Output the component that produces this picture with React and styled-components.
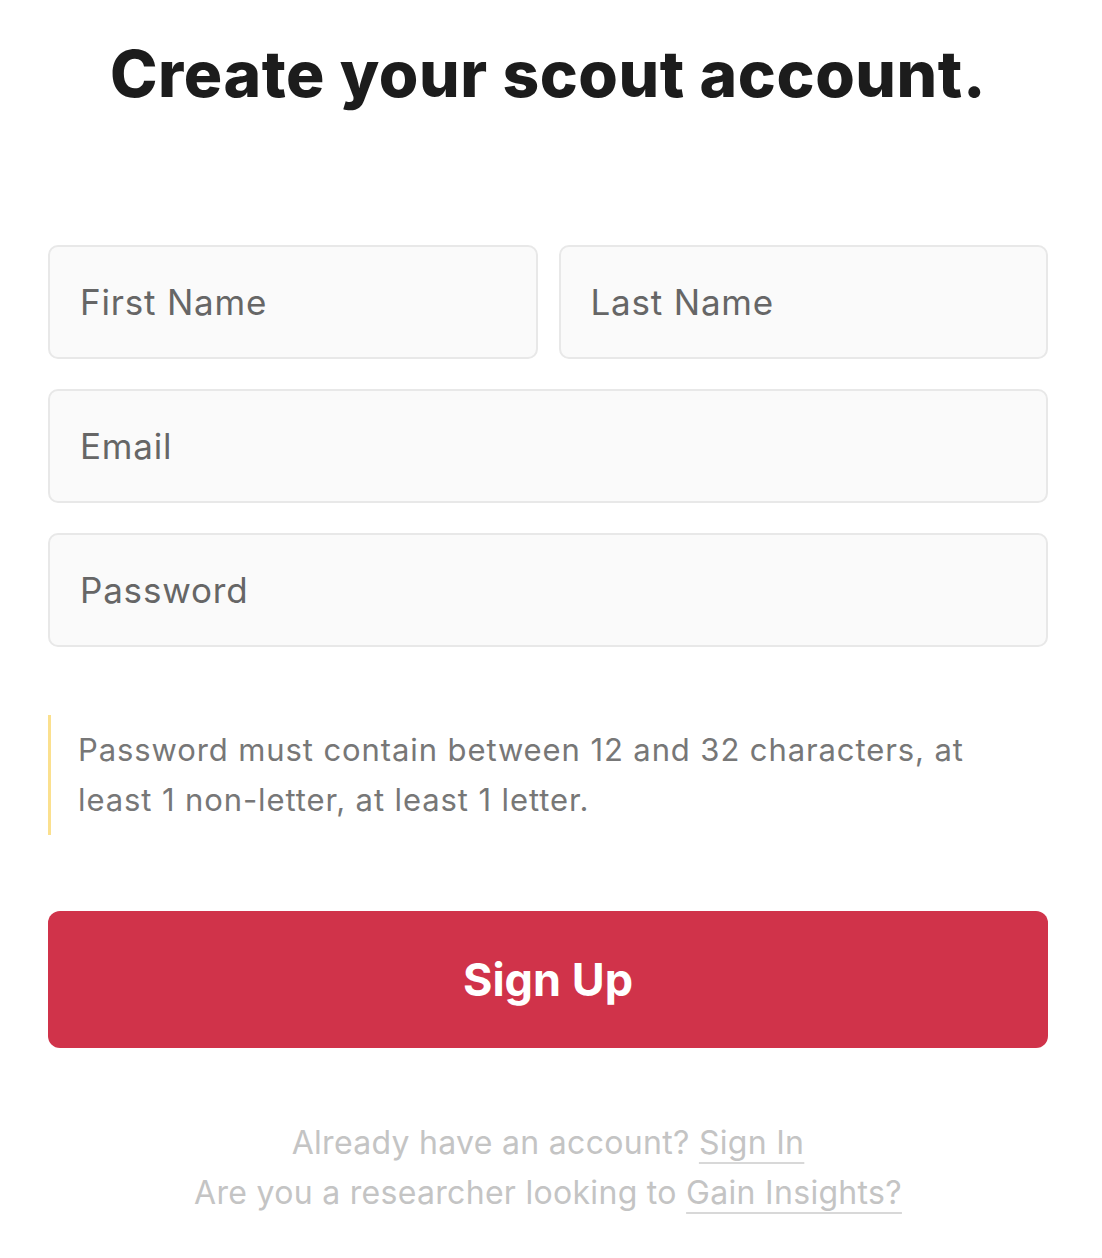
import React from 'react'
import styled, { createGlobalStyle } from 'styled-components'

const GlobalStyle = createGlobalStyle`
    body {
        margin: 0;
        background: #ffffff;
        font-family: "Inter", "Liberation Sans", sans-serif;
    }
`

const Page = styled.main`
    width: 1000px;
    padding: 0 0 40px 48px;
    display: flex;
    flex-direction: column;
`

const Title = styled.h1`
    margin: 34px 0 0;
    text-align: center;
    font-family: "Inter", "Liberation Sans", sans-serif;
    font-weight: 800;
    font-size: 64px;
    line-height: 80px;
    letter-spacing: 0.6px;
    color: #1c1c1c;
`

const Form = styled.form`
    margin-top: 131px;
    display: flex;
    flex-direction: column;
    gap: 30px;
`

const Row = styled.div`
    display: grid;
    grid-template-columns: 1fr 1fr;
    gap: 21px;
`

const Input = styled.input`
    box-sizing: border-box;
    width: 100%;
    height: 114px;
    padding: 0 30px;
    background: #fafafa;
    border: 2px solid #e8e8e8;
    border-radius: 10px;
    font-family: "Inter", "Liberation Sans", sans-serif;
    font-size: 35px;
    letter-spacing: 0.8px;
    color: #333;
    outline: none;

    &::placeholder {
        color: #666666;
    }
`

const Note = styled.p`
    margin: 68px 0 0;
    padding: 10px 60px 10px 27px;
    border-left: 3px solid #fbe08e;
    font-size: 31px;
    line-height: 50px;
    letter-spacing: 0.9px;
    color: #777777;
`

const Button = styled.button`
    margin-top: 76px;
    height: 137px;
    border: none;
    border-radius: 12px;
    background: #d0334a;
    color: #ffffff;
    font-family: "Inter", "Liberation Sans", sans-serif;
    font-weight: 700;
    font-size: 45px;
    cursor: pointer;
`

const Footer = styled.div`
    margin-top: 70px;
    text-align: center;
    font-size: 32px;
    line-height: 50px;
    letter-spacing: 0.3px;
    color: #c4c4c4;
`

const FooterLink = styled.a`
    color: #c4c4c4;
    text-decoration: underline;
    text-decoration-color: #d8d8d8;
    text-underline-offset: 8px;
    text-decoration-thickness: 2px;
    cursor: pointer;
`

export default function App() {
    return (
        <>
            <GlobalStyle />
            <Page>
                <Title>Create your scout account.</Title>
                <Form onSubmit={(e) => e.preventDefault()}>
                    <Row>
                        <Input placeholder="First Name" />
                        <Input placeholder="Last Name" />
                    </Row>
                    <Input placeholder="Email" />
                    <Input type="password" placeholder="Password" />
                </Form>
                <Note>
                    Password must contain between 12 and 32 characters, at least 1 non-letter, at least 1 letter.
                </Note>
                <Button type="button">Sign Up</Button>
                <Footer>
                    <div>Already have an account? <FooterLink>Sign In</FooterLink></div>
                    <div>Are you a researcher looking to <FooterLink>Gain Insights?</FooterLink></div>
                </Footer>
            </Page>
        </>
    )
}
